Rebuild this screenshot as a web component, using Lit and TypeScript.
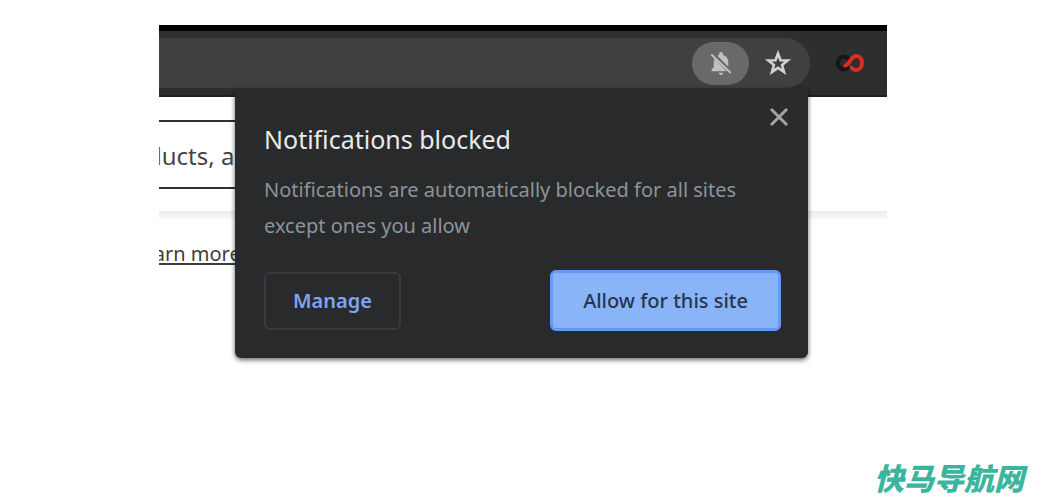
import { LitElement, html, css } from "lit";
import { customElement, state } from "lit/decorators.js";

@customElement("app-root")
export class AppRoot extends LitElement {
  @state() private open = true;

  static styles = css`
    :host {
      display: flex;
      flex-direction: column;
      box-sizing: border-box;
      min-height: 100vh;
      background: #fff;
      font-family: "Noto Sans", "Open Sans", sans-serif;
    }
    * {
      box-sizing: border-box;
    }
    button {
      margin: 0;
      padding: 0;
      border: 0;
      background: none;
      font: inherit;
      cursor: pointer;
    }
    svg {
      display: block;
    }
    .browser {
      position: relative;
      margin: 25px 165px 0 159px;
    }
    .toolbar {
      display: flex;
      align-items: center;
      height: 72px;
      padding: 0 22px 0 0;
      gap: 25px;
      background: #2e2e2e;
      border-top: 6px solid #000;
      border-bottom: 2px solid #202020;
    }
    .omnibox {
      display: flex;
      flex: 1;
      align-items: center;
      justify-content: flex-end;
      height: 50px;
      padding-right: 18px;
      gap: 15px;
      border-radius: 0 25px 25px 0;
      background: #404040;
    }
    .blocked {
      display: flex;
      align-items: center;
      justify-content: center;
      width: 57px;
      height: 43px;
      border-radius: 22px;
      background: #696969;
    }
    .page {
      overflow: hidden;
    }
    .field {
      height: 69px;
      margin-top: 23px;
      border-top: 2px solid #303032;
      border-bottom: 2px solid #303032;
      font-size: 24px;
      line-height: 68px;
      color: #444;
      white-space: nowrap;
      text-indent: -12px;
      width: 60%;
    }
    .rule {
      height: 8px;
      margin-top: 22px;
      background: linear-gradient(#ececec, #f8f8f8);
    }
    .more {
      display: block;
      margin: 21px 0 0 -27px;
      font-size: 20px;
      line-height: 28px;
      color: #3c3c3c;
      text-decoration-thickness: 2px;
      text-underline-offset: 2px;
    }
    .bubble {
      position: absolute;
      top: 63px;
      right: 79px;
      width: 573px;
      padding: 32px 27px 27px 29px;
      border-radius: 0 0 6px 6px;
      background: #292a2c;
      box-shadow: 0 2px 5px rgba(0, 0, 0, 0.6);
    }
    .close {
      position: absolute;
      top: 18px;
      right: 18px;
    }
    h1 {
      margin: 0;
      font-size: 25px;
      font-weight: 400;
      line-height: 38px;
      color: #e8eaed;
    }
    p {
      margin: 14px 0 0;
      font-size: 20px;
      line-height: 36px;
      color: #8c9499;
    }
    .actions {
      display: flex;
      align-items: center;
      justify-content: space-between;
      margin-top: 26px;
    }
    .actions button {
      font-size: 20px;
      line-height: 28px;
      border-radius: 6px;
    }
    .actions .manage {
      height: 58px;
      padding: 0 27px;
      border: 2px solid #3a3b3e;
      font-weight: 600;
      color: #7da5f3;
    }
    .actions .allow {
      height: 61px;
      padding: 0 30px;
      border: 3px solid #6699f2;
      background: #8ab4f8;
      font-weight: 500;
      color: #26364f;
    }
    .mark {
      margin: auto 28px 6px auto;
      font-family: "Noto Sans CJK SC", sans-serif;
      font-size: 30px;
      font-style: italic;
      font-weight: 900;
      line-height: 34px;
      color: #3bb59d;
    }
  `;

  render() {
    return html`
      <div class="browser">
        <div class="toolbar">
          <div class="omnibox">
            <button class="blocked" aria-label="Notifications blocked" @click=${() => (this.open = !this.open)}>
              <svg width="26" height="26" viewBox="0 0 24 24" fill="#c0c0c0">
                <path d="M12 23c1.200 0 2.200-.9 2.200-2h-4.400c0 1.100 1 2 2.200 2zM6 8C5.500 9 5.300 10 5.300 11v5l-2 2v1.500h13.700zM18.700 15.500V11c0-3.200-1.900-5.700-5-6.400V3.500c0-1-.7-1.700-1.700-1.700s-1.700.7-1.700 1.700v1.100c-.6.100-1.200.4-1.700.7z" />
                <path d="M3 4.200l18 17" stroke="#c0c0c0" stroke-width="1.900" />
              </svg>
            </button>
            <button aria-label="Bookmark this page">
              <svg width="28" height="28" viewBox="0 0 28 28" fill="none" stroke="#d2d2d2" stroke-width="2.6">
                <path d="M14 4.500l2.500 6.700 7.200.3-5.600 4.500 1.900 6.900-6-4-6 4 1.900-6.900-5.600-4.500 7.200-.3z" />
              </svg>
            </button>
          </div>
          <svg width="30" height="20" viewBox="0 0 30 20" fill="none" stroke-width="4" stroke-linecap="round">
            <path d="M13 14.500C10 18 3 16.500 3 10S10 2.500 13 5.500" stroke="#171717" />
            <path d="M10.500 12.500C15 11 16 3 21 3c8 0 8 14 0 14-2 0-3.500-1-4.500-2.500" stroke="#dc2d22" />
          </svg>
        </div>
        <div class="page">
          <div class="field">ducts, ac</div>
          <div class="rule"></div>
          <a class="more" href="#">Learn more</a>
        </div>
        ${this.open
          ? html`<section class="bubble" role="dialog" aria-labelledby="title">
              <button class="close" aria-label="Close" @click=${() => (this.open = false)}>
                <svg width="22" height="22" viewBox="0 0 22 22" stroke="#a2a4a6" stroke-width="3">
                  <path d="M3 3l16 16M19 3L3 19" />
                </svg>
              </button>
              <h1 id="title">Notifications blocked</h1>
              <p>Notifications are automatically blocked for all sites except ones you allow</p>
              <div class="actions">
                <button class="manage">Manage</button>
                <button class="allow">Allow for this site</button>
              </div>
            </section>`
          : null}
      </div>
      <div class="mark">快马导航网</div>
    `;
  }
}
